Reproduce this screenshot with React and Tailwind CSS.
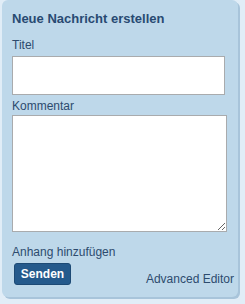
export default function App() {
  return (
    <div
      className="h-[304px] w-[245px] bg-[#e1edf7] pl-[2px]"
      style={{ fontFamily: "'Liberation Sans', Arial, sans-serif" }}
    >
      <div className="flex h-[297px] w-[236px] flex-col rounded-[6px] bg-[#bed8ea] pl-[10px] pr-[4px] pt-[11px] shadow-[2px_2px_0_#a8c4da]">
        <h2 className="text-[13px] font-bold leading-[15px] text-[#284a72]">Neue Nachricht erstellen</h2>

        <label className="mt-[12px] text-[12px] leading-[14px] text-[#2d4b6e]">Titel</label>
        <input
          type="text"
          className="mt-[4px] h-[39px] w-[213px] border border-[#a9abad] bg-white outline-none"
        />

        <label className="mt-[4px] text-[12px] leading-[14px] text-[#2d4b6e]">Kommentar</label>
        <textarea className="mt-[2px] h-[117px] w-[215px] resize border border-[#a9abad] bg-white outline-none" />

        <p className="mt-[13px] text-[12px] leading-[14px] text-[#2d4b6e]">Anhang hinzufügen</p>

        <div className="mt-[4px] flex items-end justify-between">
          <button className="ml-[2px] h-[22px] w-[57px] rounded-[3px] border border-[#1d4a75] bg-[#255a8c] text-[12px] font-bold leading-none text-white">
            Senden
          </button>
          <span className="mb-[-1px] text-[12px] leading-[14px] text-[#2d4b6e]">Advanced Editor</span>
        </div>
      </div>
    </div>
  );
}
